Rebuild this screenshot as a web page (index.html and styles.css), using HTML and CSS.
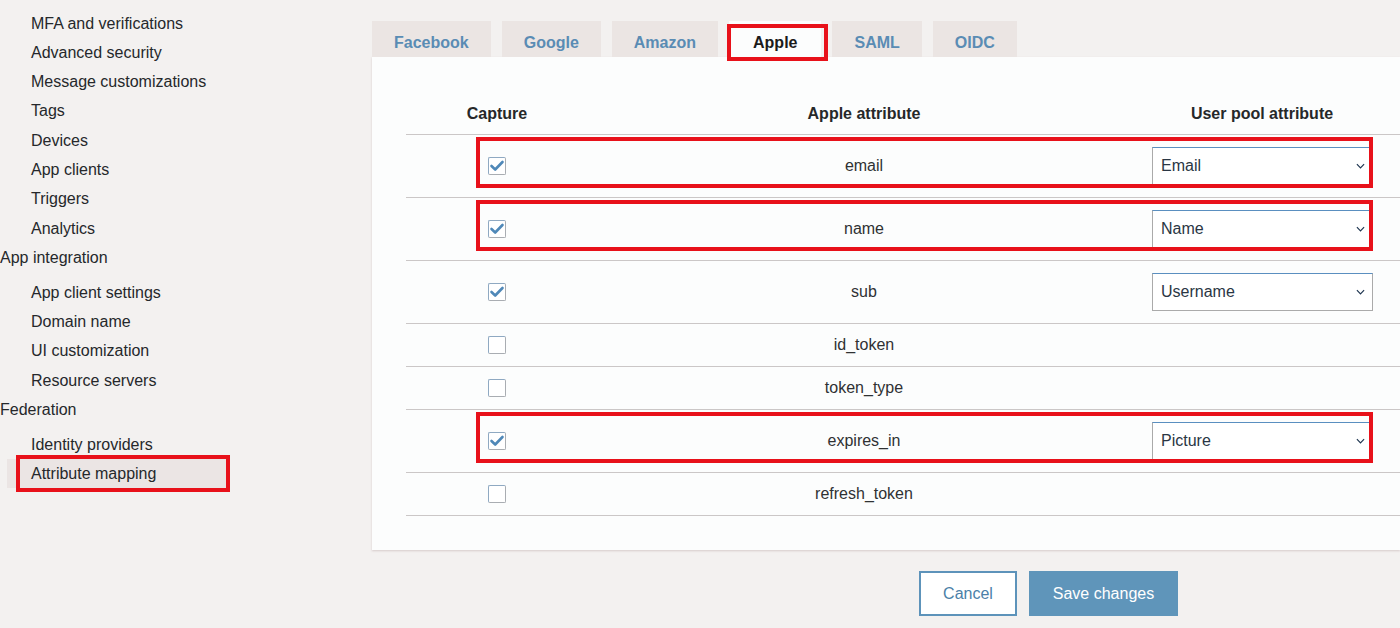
FILE: index.html
```html
<!DOCTYPE html>
<html lang="en">
<head>
<meta charset="utf-8">
<title>Attribute mapping</title>
<link rel="stylesheet" href="styles.css">
</head>
<body>
<div class="page">
  <nav class="sidebar">
    <ul class="nav-list">
      <li class="nav-item">MFA and verifications</li>
      <li class="nav-item">Advanced security</li>
      <li class="nav-item">Message customizations</li>
      <li class="nav-item">Tags</li>
      <li class="nav-item">Devices</li>
      <li class="nav-item">App clients</li>
      <li class="nav-item">Triggers</li>
      <li class="nav-item">Analytics</li>
    </ul>
    <div class="nav-group">App integration</div>
    <ul class="nav-list">
      <li class="nav-item">App client settings</li>
      <li class="nav-item">Domain name</li>
      <li class="nav-item">UI customization</li>
      <li class="nav-item">Resource servers</li>
    </ul>
    <div class="nav-group">Federation</div>
    <ul class="nav-list">
      <li class="nav-item">Identity providers</li>
      <li class="nav-item active">Attribute mapping</li>
    </ul>
  </nav>

  <main class="main">
    <div class="tabs">
      <div class="tab">Facebook</div>
      <div class="tab">Google</div>
      <div class="tab">Amazon</div>
      <div class="tab active">Apple</div>
      <div class="tab">SAML</div>
      <div class="tab">OIDC</div>
    </div>

    <section class="panel">
      <div class="table">
        <div class="row head">
          <div class="cell">Capture</div>
          <div class="cell">Apple attribute</div>
          <div class="cell">User pool attribute</div>
        </div>

        <div class="row marked">
          <div class="cell"><span class="check checked"><svg viewBox="0 0 18 18" width="18" height="18"><path d="M3.5 9 L7.2 12.5 L14.5 5" fill="none" stroke="#4f88b8" stroke-width="2.6" stroke-linecap="round" stroke-linejoin="round"/></svg></span></div>
          <div class="cell">email</div>
          <div class="cell select-cell"><div class="select"><span>Email</span><svg class="chev" viewBox="0 0 10 6" width="9" height="6"><path d="M1 1 L5 5 L9 1" fill="none" stroke="#1e3550" stroke-width="1.3"/></svg></div></div>
        </div>

        <div class="row marked">
          <div class="cell"><span class="check checked"><svg viewBox="0 0 18 18" width="18" height="18"><path d="M3.5 9 L7.2 12.5 L14.5 5" fill="none" stroke="#4f88b8" stroke-width="2.6" stroke-linecap="round" stroke-linejoin="round"/></svg></span></div>
          <div class="cell">name</div>
          <div class="cell select-cell"><div class="select"><span>Name</span><svg class="chev" viewBox="0 0 10 6" width="9" height="6"><path d="M1 1 L5 5 L9 1" fill="none" stroke="#1e3550" stroke-width="1.3"/></svg></div></div>
        </div>

        <div class="row">
          <div class="cell"><span class="check checked"><svg viewBox="0 0 18 18" width="18" height="18"><path d="M3.5 9 L7.2 12.5 L14.5 5" fill="none" stroke="#4f88b8" stroke-width="2.6" stroke-linecap="round" stroke-linejoin="round"/></svg></span></div>
          <div class="cell">sub</div>
          <div class="cell select-cell"><div class="select"><span>Username</span><svg class="chev" viewBox="0 0 10 6" width="9" height="6"><path d="M1 1 L5 5 L9 1" fill="none" stroke="#1e3550" stroke-width="1.3"/></svg></div></div>
        </div>

        <div class="row">
          <div class="cell"><span class="check"></span></div>
          <div class="cell">id_token</div>
          <div class="cell"></div>
        </div>

        <div class="row">
          <div class="cell"><span class="check"></span></div>
          <div class="cell">token_type</div>
          <div class="cell"></div>
        </div>

        <div class="row marked">
          <div class="cell"><span class="check checked"><svg viewBox="0 0 18 18" width="18" height="18"><path d="M3.5 9 L7.2 12.5 L14.5 5" fill="none" stroke="#4f88b8" stroke-width="2.6" stroke-linecap="round" stroke-linejoin="round"/></svg></span></div>
          <div class="cell">expires_in</div>
          <div class="cell select-cell"><div class="select"><span>Picture</span><svg class="chev" viewBox="0 0 10 6" width="9" height="6"><path d="M1 1 L5 5 L9 1" fill="none" stroke="#1e3550" stroke-width="1.3"/></svg></div></div>
        </div>

        <div class="row">
          <div class="cell"><span class="check"></span></div>
          <div class="cell">refresh_token</div>
          <div class="cell"></div>
        </div>
      </div>
    </section>

    <div class="actions">
      <button class="btn secondary" type="button">Cancel</button>
      <button class="btn primary" type="button">Save changes</button>
    </div>
  </main>
</div>
</body>
</html>
```

FILE: styles.css
```css
html, body {
  margin: 0;
  padding: 0;
}

body {
  background: #f3f1f0;
  font-family: "Liberation Sans", Arial, sans-serif;
  font-size: 16px;
  color: #25282b;
  overflow: hidden;
}

.page {
  display: flex;
  height: 628px;
}

/* Sidebar */
.sidebar {
  width: 372px;
  flex: none;
  padding-top: 8.5px;
  box-sizing: border-box;
}

.nav-list {
  list-style: none;
  margin: 0;
  padding: 0;
}

.nav-item {
  line-height: 29.3px;
  padding-left: 31px;
}

.nav-group {
  line-height: 29.3px;
  margin-bottom: 5.5px;
}

.nav-item.active {
  position: relative;
  margin-left: 7px;
  padding-left: 24px;
  width: 221px;
  box-sizing: border-box;
  background: #ebe5e4;
}

.nav-item.active::after {
  content: "";
  position: absolute;
  left: 9px;
  right: -2px;
  top: -4px;
  bottom: -4px;
  border: 4px solid #e8111a;
}

/* Main */
.main {
  flex: none;
  width: 1028px;
  padding-top: 21px;
}

.tabs {
  display: flex;
  gap: 11px;
}

.tab {
  height: 36px;
  padding: 7px 22px 0;
  box-sizing: border-box;
  display: flex;
  align-items: center;
  background: #ebe5e3;
  color: #5a8cb4;
  font-weight: bold;
}

.tab.active {
  position: relative;
  padding: 7px 24px 0;
  background: #fcfdfd;
  color: #1b1b1b;
}

.tab.active::after {
  content: "";
  position: absolute;
  left: -2px;
  right: -7px;
  top: 3px;
  bottom: -4px;
  border: 4px solid #e8111a;
}

.panel {
  background: #fcfdfd;
  padding: 37px 0 34px 34px;
  box-shadow: 0 1px 2px rgba(150, 115, 115, 0.3);
}

.row {
  position: relative;
  display: grid;
  grid-template-columns: 182px 552px 244px 1fr;
  align-items: center;
  min-height: 42px;
  border-bottom: 1px solid #cbc7c7;
  color: #2f3133;
}

.row.head {
  min-height: 40px;
  font-weight: bold;
  color: #262829;
}

.row.marked::after {
  content: "";
  position: absolute;
  left: 70px;
  width: 897px;
  top: 2px;
  height: 51px;
  box-sizing: border-box;
  border: 4px solid #e8111a;
}

.cell {
  display: flex;
  justify-content: center;
  align-items: center;
}

.cell.select-cell {
  display: block;
  padding: 12px 11px 12px 12px;
}

.select {
  height: 38px;
  box-sizing: border-box;
  border: 1px solid #aaaaaa;
  border-top-color: #5a8fc0;
  background: #ffffff;
  display: flex;
  align-items: center;
  justify-content: space-between;
  padding: 0 7px 0 8px;
  color: #2a3644;
}

.chev {
  display: block;
}

.check {
  display: block;
  width: 18px;
  height: 18px;
  box-sizing: border-box;
  border: 1px solid #a9adb2;
  border-top-color: #8fa9c2;
  border-left-color: #8fa9c2;
  border-radius: 2px;
  background: #ffffff;
  position: relative;
}

.check svg {
  position: absolute;
  left: -1px;
  top: -1px;
}

/* Actions */
.actions {
  display: flex;
  gap: 12px;
  padding: 21px 0 0 547px;
}

.btn {
  height: 45px;
  box-sizing: border-box;
  font-family: inherit;
  font-size: 16px;
  display: flex;
  align-items: center;
  justify-content: center;
  cursor: pointer;
}

.btn.secondary {
  width: 98px;
  border: 2px solid #5d93ba;
  background: #ffffff;
  color: #4b7fa8;
}

.btn.primary {
  width: 149px;
  border: none;
  background: #5f95ba;
  color: #ffffff;
}
```
